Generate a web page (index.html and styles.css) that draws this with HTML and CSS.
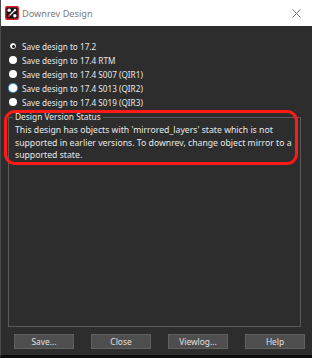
FILE: index.html
```html
<!DOCTYPE html>
<html lang="en">
<head>
    <meta charset="UTF-8">
    <title>Downrev Design</title>
    <link rel="stylesheet" href="styles.css">
</head>
<body>
    <div class="window">
        <div class="titlebar">
            <svg class="app-icon" width="14" height="14" viewBox="0 0 14 14">
                <rect x="0" y="0" width="14" height="14" rx="2" fill="#e0202a"/>
                <rect x="1.5" y="1.5" width="11" height="11" rx="1" fill="#15151c"/>
                <line x1="4" y1="10" x2="10" y2="4" stroke="#fff" stroke-width="1.2"/>
                <circle cx="4.2" cy="4.2" r="1.7" fill="#fff"/>
                <circle cx="9.8" cy="9.8" r="1.7" fill="#fff"/>
                <circle cx="4" cy="10" r="1.2" fill="#e0202a"/>
                <circle cx="10" cy="4" r="1.2" fill="#fff"/>
            </svg>
            <span class="title">Downrev Design</span>
            <svg class="close" width="9" height="9" viewBox="0 0 9 9">
                <path d="M0.5 0.5L8.5 8.5M8.5 0.5L0.5 8.5" stroke="#777" stroke-width="1" fill="none"/>
            </svg>
        </div>
        <div class="body">
            <ul class="options">
                <li><span class="radio checked"></span>Save design to 17.2</li>
                <li><span class="radio"></span>Save design to 17.4 RTM</li>
                <li><span class="radio"></span>Save design to 17.4 S007 (QIR1)</li>
                <li><span class="radio focus"></span>Save design to 17.4 S013 (QIR2)</li>
                <li><span class="radio"></span>Save design to 17.4 S019 (QIR3)</li>
            </ul>
            <fieldset class="status">
                <legend>Design Version Status</legend>
                <p>This design has objects with 'mirrored_layers' state which is not supported in earlier versions. To downrev, change object mirror to a supported state.</p>
            </fieldset>
            <div class="highlight"></div>
            <div class="buttons">
                <button>Save...</button>
                <button>Close</button>
                <button>Viewlog...</button>
                <button>Help</button>
            </div>
        </div>
    </div>
</body>
</html>
```

FILE: styles.css
```css
body {
    margin: 0;
    font-family: "Noto Sans", "Open Sans", sans-serif;
    background: #1a1a1a;
}
.window {
    width: 311px;
    height: 355px;
    border-left: 1px solid #4a4a4a;
    border-bottom: 3px solid #0c0c0c;
    display: flex;
    flex-direction: column;
}
.titlebar {
    height: 26px;
    flex-shrink: 0;
    background: #fff;
    display: flex;
    align-items: center;
    padding-left: 4px;
}
.app-icon {
    margin-right: 3px;
}
.title {
    color: #7a7a7a;
    font-size: 9.2px;
    flex: 1;
}
.close {
    margin-right: 11px;
}
.body {
    flex: 1;
    min-height: 0;
    background: #2d2d2d;
    position: relative;
    display: flex;
    flex-direction: column;
    padding: 13px 11px 6px 7px;
}
.options {
    list-style: none;
    margin: 0;
    padding: 0;
}
.options li {
    height: 14px;
    display: flex;
    align-items: center;
    color: #e8e8e8;
    font-size: 8.2px;
}
.radio {
    width: 8px;
    height: 8px;
    border-radius: 50%;
    background: #fff;
    margin: 0 5px 0 1px;
    display: flex;
    align-items: center;
    justify-content: center;
    box-sizing: border-box;
}
.radio.checked {
    border: 1px solid #111;
}
.radio.checked::after {
    content: "";
    width: 3px;
    height: 3px;
    border-radius: 50%;
    background: #111;
}
.radio.focus {
    box-shadow: 0 0 0 1px #4a9be0;
}
.status {
    margin: 3px 0 0 0;
    padding: 0 2px 0 6px;
    border: 1px solid #5a5a5a;
    flex: 1;
    min-height: 0;
}
.status legend {
    color: #e8e8e8;
    font-size: 8.4px;
    line-height: 10px;
    padding: 0 2px;
    margin-left: -2px;
}
.status p {
    margin: 2px 0 0 0;
    color: #e8e8e8;
    font-size: 8.7px;
    line-height: 12.5px;
}
.highlight {
    position: absolute;
    left: 3px;
    top: 84px;
    width: 288px;
    height: 49px;
    border: 3px solid #ff1a1a;
    border-radius: 11px;
}
.buttons {
    display: flex;
    gap: 17px;
    margin: 7px -6px 0 6px;
}
.buttons button {
    width: 60px;
    height: 15px;
    flex-shrink: 0;
    padding: 0;
    background: #4e4e4e;
    border: 1px solid #606060;
    color: #e0e0e0;
    font-family: "Noto Sans", "Open Sans", sans-serif;
    font-size: 8.4px;
    line-height: 13px;
}
```
